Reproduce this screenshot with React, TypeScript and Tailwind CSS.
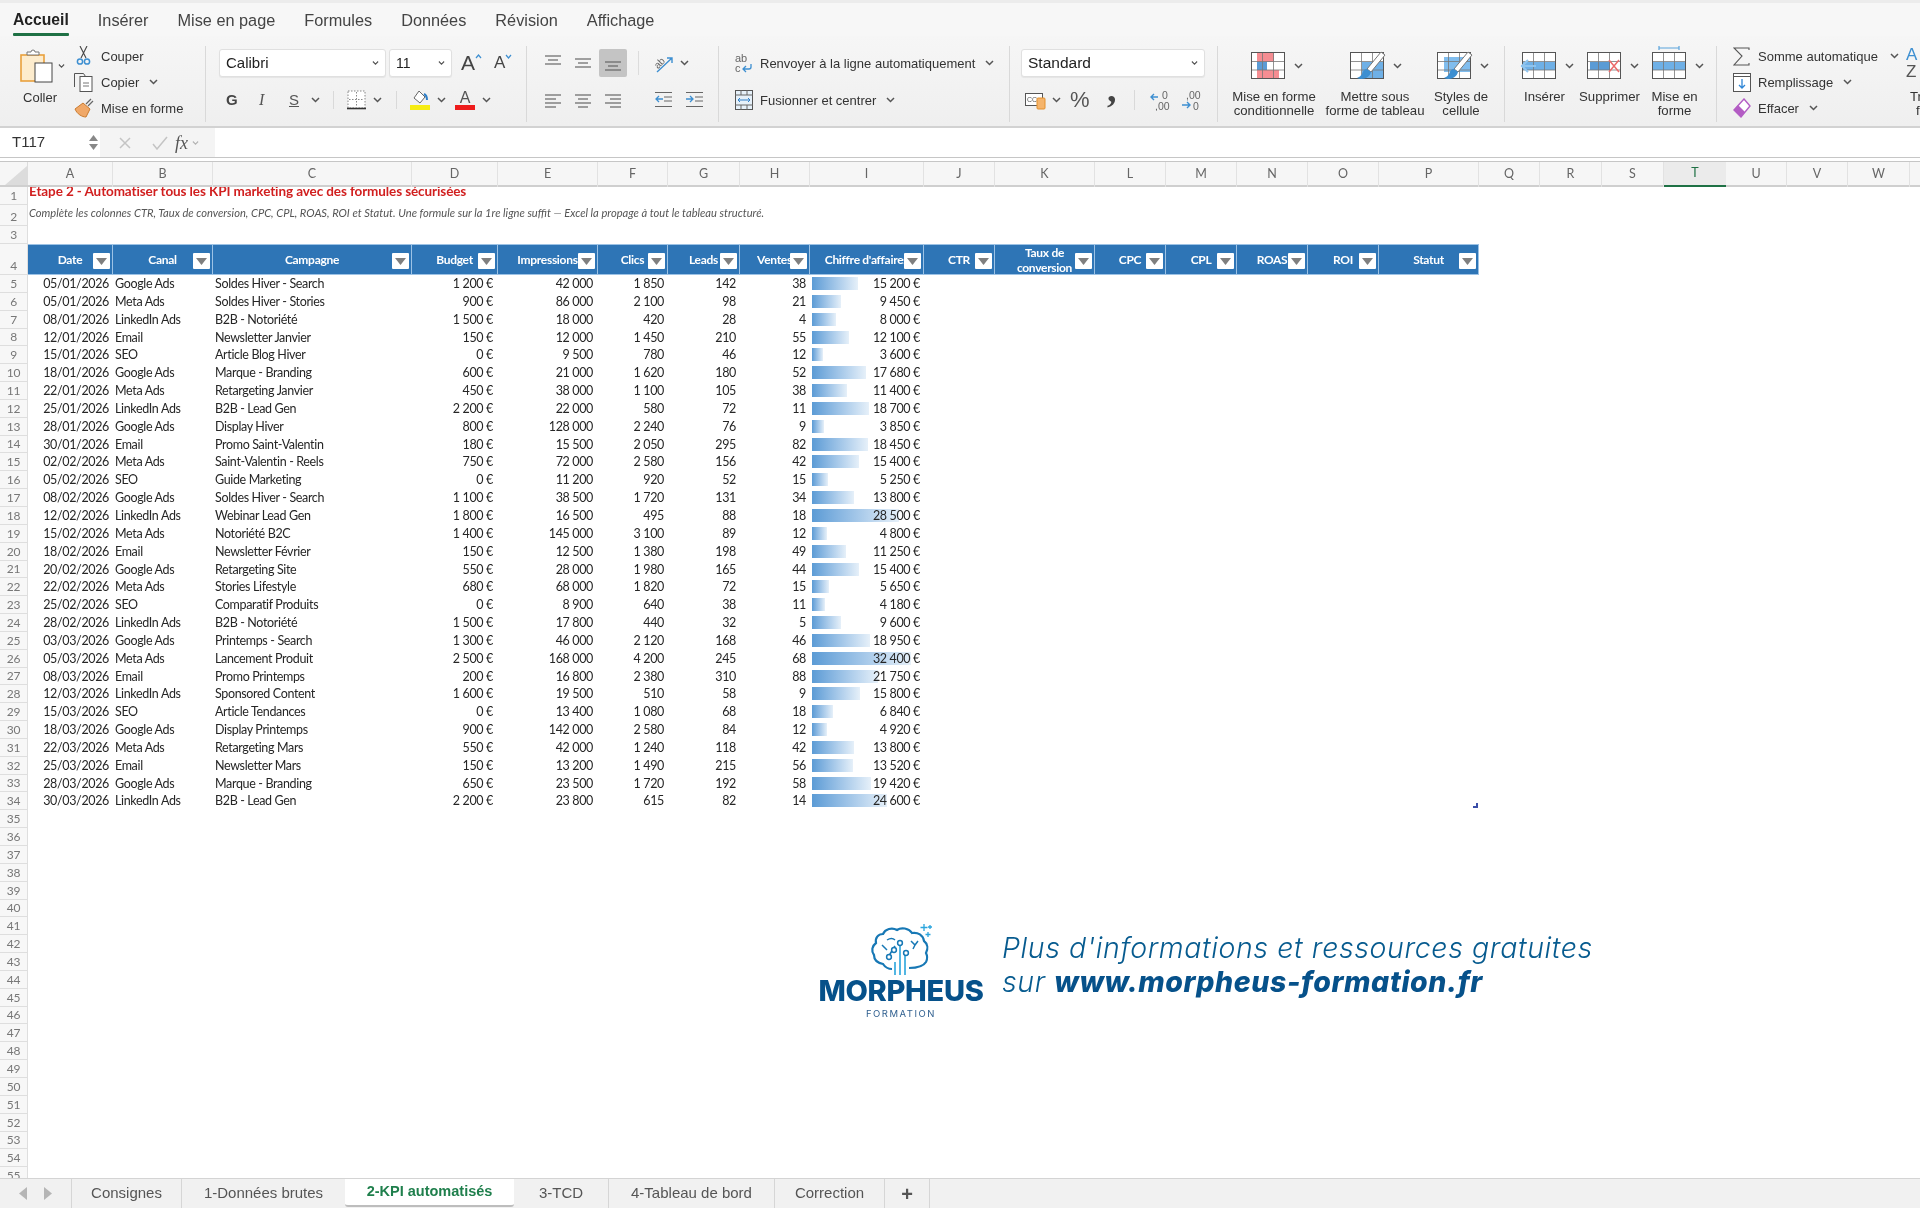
import type { ReactNode } from 'react';

const SHEET_COLS =
    'grid grid-cols-[85px_100px_199px_86px_100px_70px_72px_70px_114px_71px_100px_71px_71px_71px_71px_100px_61px_62px_62px_62px_61px_61px_62px_62px]';

const letters = 'ABCDEFGHIJKLMNOPQRSTUVWX'.split('');

const headers = ['Date', 'Canal', 'Campagne', 'Budget', 'Impressions', 'Clics', 'Leads', 'Ventes', "Chiffre d'affaires", 'CTR', 'Taux de conversion', 'CPC', 'CPL', 'ROAS', 'ROI', 'Statut'];

const rows: [string, string, string, string, string, string, string, string, string, number][] = [
    ['05/01/2026', 'Google Ads', 'Soldes Hiver - Search', '1 200 €', '42 000', '1 850', '142', '38', '15 200 €', 15200],
    ['05/01/2026', 'Meta Ads', 'Soldes Hiver - Stories', '900 €', '86 000', '2 100', '98', '21', '9 450 €', 9450],
    ['08/01/2026', 'LinkedIn Ads', 'B2B - Notoriété', '1 500 €', '18 000', '420', '28', '4', '8 000 €', 8000],
    ['12/01/2026', 'Email', 'Newsletter Janvier', '150 €', '12 000', '1 450', '210', '55', '12 100 €', 12100],
    ['15/01/2026', 'SEO', 'Article Blog Hiver', '0 €', '9 500', '780', '46', '12', '3 600 €', 3600],
    ['18/01/2026', 'Google Ads', 'Marque - Branding', '600 €', '21 000', '1 620', '180', '52', '17 680 €', 17680],
    ['22/01/2026', 'Meta Ads', 'Retargeting Janvier', '450 €', '38 000', '1 100', '105', '38', '11 400 €', 11400],
    ['25/01/2026', 'LinkedIn Ads', 'B2B - Lead Gen', '2 200 €', '22 000', '580', '72', '11', '18 700 €', 18700],
    ['28/01/2026', 'Google Ads', 'Display Hiver', '800 €', '128 000', '2 240', '76', '9', '3 850 €', 3850],
    ['30/01/2026', 'Email', 'Promo Saint-Valentin', '180 €', '15 500', '2 050', '295', '82', '18 450 €', 18450],
    ['02/02/2026', 'Meta Ads', 'Saint-Valentin - Reels', '750 €', '72 000', '2 580', '156', '42', '15 400 €', 15400],
    ['05/02/2026', 'SEO', 'Guide Marketing', '0 €', '11 200', '920', '52', '15', '5 250 €', 5250],
    ['08/02/2026', 'Google Ads', 'Soldes Hiver - Search', '1 100 €', '38 500', '1 720', '131', '34', '13 800 €', 13800],
    ['12/02/2026', 'LinkedIn Ads', 'Webinar Lead Gen', '1 800 €', '16 500', '495', '88', '18', '28 500 €', 28500],
    ['15/02/2026', 'Meta Ads', 'Notoriété B2C', '1 400 €', '145 000', '3 100', '89', '12', '4 800 €', 4800],
    ['18/02/2026', 'Email', 'Newsletter Février', '150 €', '12 500', '1 380', '198', '49', '11 250 €', 11250],
    ['20/02/2026', 'Google Ads', 'Retargeting Site', '550 €', '28 000', '1 980', '165', '44', '15 400 €', 15400],
    ['22/02/2026', 'Meta Ads', 'Stories Lifestyle', '680 €', '68 000', '1 820', '72', '15', '5 650 €', 5650],
    ['25/02/2026', 'SEO', 'Comparatif Produits', '0 €', '8 900', '640', '38', '11', '4 180 €', 4180],
    ['28/02/2026', 'LinkedIn Ads', 'B2B - Notoriété', '1 500 €', '17 800', '440', '32', '5', '9 600 €', 9600],
    ['03/03/2026', 'Google Ads', 'Printemps - Search', '1 300 €', '46 000', '2 120', '168', '46', '18 950 €', 18950],
    ['05/03/2026', 'Meta Ads', 'Lancement Produit', '2 500 €', '168 000', '4 200', '245', '68', '32 400 €', 32400],
    ['08/03/2026', 'Email', 'Promo Printemps', '200 €', '16 800', '2 380', '310', '88', '21 750 €', 21750],
    ['12/03/2026', 'LinkedIn Ads', 'Sponsored Content', '1 600 €', '19 500', '510', '58', '9', '15 800 €', 15800],
    ['15/03/2026', 'SEO', 'Article Tendances', '0 €', '13 400', '1 080', '68', '18', '6 840 €', 6840],
    ['18/03/2026', 'Google Ads', 'Display Printemps', '900 €', '142 000', '2 580', '84', '12', '4 920 €', 4920],
    ['22/03/2026', 'Meta Ads', 'Retargeting Mars', '550 €', '42 000', '1 240', '118', '42', '13 800 €', 13800],
    ['25/03/2026', 'Email', 'Newsletter Mars', '150 €', '13 200', '1 490', '215', '56', '13 520 €', 13520],
    ['28/03/2026', 'Google Ads', 'Marque - Branding', '650 €', '23 500', '1 720', '192', '58', '19 420 €', 19420],
    ['30/03/2026', 'LinkedIn Ads', 'B2B - Lead Gen', '2 200 €', '23 800', '615', '82', '14', '24 600 €', 24600],
];

const emptyRows = Array.from({ length: 21 }, (_, i) => i + 35);

function Chev({ className = '' }: { className?: string }) {
    return (
        <svg width="9" height="6" viewBox="0 0 9 6" className={`shrink-0 ${className}`}>
            <path d="M1 1l3.5 3.5L8 1" fill="none" stroke="#555" strokeWidth="1.5" />
        </svg>
    );
}

// three horizontal strokes, for the alignment buttons
function Lines({ rows: strokes, className = '' }: { rows: [number, number, number][]; className?: string }) {
    return (
        <svg width="18" height="16" viewBox="0 0 18 16" className={`shrink-0 ${className}`}>
            {strokes.map(([x1, x2, y]) => (
                <line key={y} x1={x1} x2={x2} y1={y} y2={y} stroke="#666" strokeWidth="1.2" />
            ))}
        </svg>
    );
}

function CellGrid({ children, over }: { children?: ReactNode; over?: ReactNode }) {
    return (
        <svg width="35" height="27" viewBox="0 0 35 27" className="shrink-0 overflow-visible">
            <rect x="0.5" y="0.5" width="33" height="26" fill="#fff" />
            {children}
            <path d="M11.500 1v25M22.500 1v25M1 9.500h32M1 18h32" stroke="#777" strokeWidth="0.8" />
            <rect x="0.5" y="0.5" width="33" height="26" fill="none" stroke="#555" />
            {over}
        </svg>
    );
}

function BrushOver() {
    return (
        <g>
            <path d="M35 3L21 20l-4-3L31 0z" fill="#fff" stroke="#777" />
            <path d="M17 17c-3 0-4 2-5 5-1 2-3 3-5 4 5 2 12 1 14-6z" fill="#3d8fd1" />
        </g>
    );
}

function Sep() {
    return <div className="w-px h-[76px] bg-[#d9d9d9] shrink-0" />;
}

function SmallLabel({ children, className = '' }: { children: ReactNode; className?: string }) {
    return <span className={`text-[13px] leading-[15px] text-[#333] whitespace-nowrap ${className}`}>{children}</span>;
}

function Select({ label, className, textClass = 'text-[15px]' }: { label: string; className: string; textClass?: string }) {
    return (
        <div className={`h-[28px] bg-white border border-[#e0e0e0] rounded-[3px] shadow-[0_1px_1px_rgba(0,0,0,0.06)] flex items-center justify-between pl-[6px] pr-[5px] ${className}`}>
            <span className={`${textClass} text-[#222]`}>{label}</span>
            <Chev className="scale-75" />
        </div>
    );
}

function LargeAction({ label, icon, width, offset }: { label: ReactNode; icon: ReactNode; width: string; offset?: string }) {
    return (
        <div className={`flex flex-col items-center shrink-0 ${width}`}>
            <div className={`flex items-center h-[27px] mt-[6px] gap-[8px] ${offset ?? ''}`}>
                {icon}
                <Chev />
            </div>
            <div className="mt-[11px] text-center text-[13.2px] leading-[14px] text-[#333] whitespace-nowrap">{label}</div>
        </div>
    );
}

function ClipboardGroup() {
    return (
        <div className="flex w-[205px] shrink-0">
            <div className="w-[73px] pl-[20px] shrink-0">
                <div className="flex items-center gap-[4px] mt-[3px]">
                    <svg width="33" height="34" viewBox="0 0 33 34" className="shrink-0">
                        <rect x="1" y="6" width="23" height="26" fill="#fdeccd" stroke="#e9a13c" strokeWidth="1.6" />
                        <path d="M7 6V3h4a2 2 0 014 0h4v3z" fill="#fff" stroke="#777" />
                        <rect x="15" y="14" width="17" height="19" fill="#fff" stroke="#444" />
                    </svg>
                    <Chev className="scale-75" />
                </div>
                <div className="mt-[7px] w-[40px] text-center text-[13px] leading-[15px] text-[#333]">Coller</div>
            </div>
            <div className="flex flex-col gap-[6px]">
                <div className="h-[20px] flex items-center gap-[7px]">
                    <svg width="21" height="20" viewBox="0 0 21 20" className="shrink-0">
                        <path d="M7 0l6 12M14 0L8 12" stroke="#444" strokeWidth="1.1" fill="none" />
                        <circle cx="7" cy="15.500" r="2.600" fill="none" stroke="#3d8fd1" strokeWidth="1.5" />
                        <circle cx="14" cy="15.500" r="2.600" fill="none" stroke="#3d8fd1" strokeWidth="1.5" />
                    </svg>
                    <SmallLabel>Couper</SmallLabel>
                </div>
                <div className="h-[20px] flex items-center gap-[7px]">
                    <svg width="21" height="20" viewBox="0 0 21 20" className="shrink-0">
                        <path d="M1.500 15V1.500h9l2 3" fill="none" stroke="#555" />
                        <rect x="7" y="4.500" width="12" height="15" fill="#fff" stroke="#555" />
                        <path d="M10 11h6M10 14h6" stroke="#777" />
                    </svg>
                    <SmallLabel>Copier</SmallLabel>
                    <Chev className="ml-[3px]" />
                </div>
                <div className="h-[20px] flex items-center gap-[7px]">
                    <svg width="21" height="20" viewBox="0 0 21 20" className="shrink-0">
                        <path d="M13 6l5-5M15 8l5-5" stroke="#666" strokeWidth="1.2" />
                        <path d="M10 5l7 6-4 8c-4 0-9-3-11-8z" fill="#f0a868" stroke="#c97a2e" />
                    </svg>
                    <SmallLabel>Mise en forme</SmallLabel>
                </div>
            </div>
        </div>
    );
}

function FontGroup() {
    return (
        <div className="w-[320px] shrink-0 pl-[13px] pt-[3px]">
            <div className="flex items-center">
                <Select label="Calibri" className="w-[167px]" />
                <Select label="11" className="w-[63px] ml-[3px]" textClass="text-[14px]" />
                <div className="ml-[9px] flex items-start w-[22px] text-[21px] leading-[24px] text-[#444]">
                    A<svg width="7" height="6" viewBox="0 0 7 6" className="mt-[3px]"><path d="M1 4l2.500-3L6 4" fill="none" stroke="#3d8fd1" strokeWidth="1.2" /></svg>
                </div>
                <div className="ml-[11px] flex items-start w-[22px] text-[17px] leading-[24px] text-[#444]">
                    A<svg width="7" height="6" viewBox="0 0 7 6" className="mt-[3px]"><path d="M1 1l2.500 3L6 1" fill="none" stroke="#3d8fd1" strokeWidth="1.2" /></svg>
                </div>
            </div>
            <div className="flex items-center h-[22px] mt-[12px]">
                <span className="ml-[7px] w-[23px] text-[15px] font-bold text-[#444]">G</span>
                <span className="ml-[10px] w-[22px] text-[16px] italic text-[#555] font-['Liberation_Serif',serif]">I</span>
                <span className="ml-[8px] w-[18px] text-[15px] underline text-[#555]">S</span>
                <Chev className="ml-[4px]" />
                <div className="w-px h-[18px] bg-[#d9d9d9] ml-[13px]" />
                <svg width="19" height="20" viewBox="0 0 19 20" className="ml-[13px] shrink-0">
                    <rect x="1" y="1" width="17" height="17" fill="#fff" stroke="#888" strokeDasharray="1.5 1.5" />
                    <path d="M9.500 2v15M2 9.500h15" stroke="#888" strokeDasharray="1.5 1.5" />
                    <path d="M0 18.500h19" stroke="#333" strokeWidth="1.6" />
                </svg>
                <Chev className="ml-[7px]" />
                <div className="w-px h-[18px] bg-[#d9d9d9] ml-[14px]" />
                <div className="ml-[13px] w-[20px] shrink-0 flex flex-col items-center">
                    <svg width="18" height="15" viewBox="0 0 18 15">
                        <path d="M8 1l6 6-5 6-6-5z" fill="#fff" stroke="#666" />
                        <path d="M13 4c2 1 3 3 3 6" fill="none" stroke="#2f7fc8" strokeWidth="2" />
                    </svg>
                    <div className="w-[20px] h-[5px] bg-[#f6ec12]" />
                </div>
                <Chev className="ml-[7px]" />
                <div className="ml-[9px] w-[20px] shrink-0 flex flex-col items-center">
                    <span className="text-[16px] leading-[15px] text-[#555]">A</span>
                    <div className="w-[20px] h-[5px] bg-[#ee1c1c]" />
                </div>
                <Chev className="ml-[7px]" />
            </div>
        </div>
    );
}

function AlignGroup() {
    return (
        <div className="w-[191px] shrink-0 pl-[17px] pt-[3px]">
            <div className="flex items-center h-[28px]">
                <Lines rows={[[1, 17, 1], [4, 14, 5], [1, 17, 9]]} />
                <Lines rows={[[1, 17, 4], [4, 14, 8], [1, 17, 12]]} className="ml-[12px]" />
                <div className="ml-[7px] w-[28px] h-[28px] bg-[#c4c4c4] rounded-[2px] flex items-center justify-center">
                    <Lines rows={[[1, 17, 7], [4, 14, 11], [1, 17, 15]]} />
                </div>
                <div className="w-px h-[24px] bg-[#dcdcdc] ml-[11px]" />
                <svg width="20" height="21" viewBox="0 0 20 21" className="ml-[15px] shrink-0">
                    <text x="0" y="13" fontSize="10" fill="#666" transform="rotate(-45 6 10)" fontFamily="Liberation Sans">ab</text>
                    <path d="M3 19L18 5M13 5h5v5" fill="none" stroke="#3d8fd1" strokeWidth="1.4" />
                </svg>
                <Chev className="ml-[6px]" />
            </div>
            <div className="flex items-center h-[20px] mt-[13px]">
                <Lines rows={[[1, 17, 3], [1, 12, 7], [1, 17, 11], [1, 12, 15]]} />
                <Lines rows={[[1, 17, 3], [4, 14, 7], [1, 17, 11], [4, 14, 15]]} className="ml-[12px]" />
                <Lines rows={[[1, 17, 3], [6, 17, 7], [1, 17, 11], [6, 17, 15]]} className="ml-[12px]" />
                <svg width="18" height="18" viewBox="0 0 18 18" className="ml-[33px] shrink-0">
                    <path d="M0 1.500h17M9 6h8M9 10h8M0 15.500h17" stroke="#666" />
                    <path d="M8 8H1M4 5L1 8l3 3" fill="none" stroke="#3d8fd1" strokeWidth="1.3" />
                </svg>
                <svg width="18" height="18" viewBox="0 0 18 18" className="ml-[13px] shrink-0">
                    <path d="M0 1.500h17M9 6h8M9 10h8M0 15.500h17" stroke="#666" />
                    <path d="M0 8h7M4 5l3 3-3 3" fill="none" stroke="#3d8fd1" strokeWidth="1.3" />
                </svg>
            </div>
        </div>
    );
}

function WrapGroup() {
    return (
        <div className="w-[290px] shrink-0 pl-[16px] pt-[3px]">
            <div className="flex items-center h-[28px]">
                <svg width="18" height="20" viewBox="0 0 18 20" className="shrink-0">
                    <text x="0" y="9" fontSize="11" fill="#666" fontFamily="Liberation Sans">ab</text>
                    <text x="0" y="19" fontSize="11" fill="#666" fontFamily="Liberation Sans">c</text>
                    <path d="M16 11v3a2 2 0 01-2 2H8M11 13l-3 3 3 3" fill="none" stroke="#3d8fd1" strokeWidth="1.3" />
                </svg>
                <SmallLabel className="ml-[7px] w-[220px]">Renvoyer à la ligne automatiquement</SmallLabel>
                <Chev className="ml-[5px]" />
            </div>
            <div className="flex items-center h-[20px] mt-[13px]">
                <svg width="18" height="20" viewBox="0 0 18 20" className="shrink-0">
                    <rect x="0.5" y="0.5" width="17" height="19" fill="#e6f1fa" stroke="#555" />
                    <path d="M0 5h18M0 15h18M6 0v5M12 0v5M6 15v5M12 15v5" stroke="#666" />
                    <path d="M3 10h12M5 8l-2 2 2 2M13 8l2 2-2 2" fill="none" stroke="#2f7fc8" />
                </svg>
                <SmallLabel className="ml-[7px] w-[121px]">Fusionner et centrer</SmallLabel>
                <Chev className="ml-[5px]" />
            </div>
        </div>
    );
}

function NumberGroup() {
    return (
        <div className="w-[207px] shrink-0 pl-[11px] pt-[3px]">
            <Select label="Standard" className="w-[184px]" textClass="text-[15.500px]" />
            <div className="flex items-center h-[22px] mt-[12px]">
                <svg width="21" height="20" viewBox="0 0 21 20" className="ml-[4px] shrink-0">
                    <rect x="0.5" y="3.500" width="17" height="12" fill="#fff" stroke="#555" />
                    <text x="2" y="12" fontSize="7" fill="#555" fontFamily="Liberation Sans">CC</text>
                    <rect x="12" y="8" width="8" height="11" rx="1" fill="#f5b46b" stroke="#e2902f" />
                </svg>
                <Chev className="ml-[6px]" />
                <span className="ml-[9px] w-[22px] text-[22px] leading-[22px] font-light text-[#555]">%</span>
                <span className="ml-[15px] w-[12px] h-[22px] text-[38px] leading-[0px] font-bold text-[#444] font-['Liberation_Serif',serif]">,</span>
                <div className="w-px h-[20px] bg-[#d9d9d9] ml-[15px]" />
                <svg width="20" height="21" viewBox="0 0 20 21" className="ml-[15px] shrink-0">
                    <path d="M8 7H1M4 4L1 7l3 3" fill="none" stroke="#3d8fd1" strokeWidth="1.4" />
                    <text x="12" y="9" fontSize="10.500" fill="#666" fontFamily="Liberation Sans">0</text>
                    <text x="5" y="20" fontSize="10.500" fill="#666" fontFamily="Liberation Sans">,00</text>
                </svg>
                <svg width="20" height="21" viewBox="0 0 20 21" className="ml-[11px] shrink-0">
                    <text x="5" y="9" fontSize="10.500" fill="#666" fontFamily="Liberation Sans">,00</text>
                    <path d="M1 15h8M6 12l3 3-3 3" fill="none" stroke="#3d8fd1" strokeWidth="1.4" />
                    <text x="12" y="20" fontSize="10.500" fill="#666" fontFamily="Liberation Sans">0</text>
                </svg>
            </div>
        </div>
    );
}

function StylesGroup() {
    return (
        <div className="flex w-[286px] shrink-0">
            <LargeAction
                width="w-[112px]"
                label={<>Mise en forme<br />conditionnelle</>}
                offset="ml-[6px]"
                icon={
                    <CellGrid>
                        <rect x="6" y="1" width="17" height="9" fill="#f58d92" />
                        <rect x="6" y="10" width="10" height="8" fill="#5b9bd5" />
                        <rect x="6" y="18" width="22" height="8" fill="#f58d92" />
                    </CellGrid>
                }
            />
            <LargeAction
                width="w-[90px]"
                label={<>Mettre sous<br />forme de tableau</>}
                offset="ml-[2px]"
                icon={
                    <CellGrid over={<BrushOver />}>
                        <rect x="12" y="10" width="21" height="16" fill="#6fb0e6" />
                    </CellGrid>
                }
            />
            <LargeAction
                width="w-[82px]"
                label={<>Styles de<br />cellule</>}
                offset="ml-[4px]"
                icon={
                    <CellGrid over={<BrushOver />}>
                        <rect x="7" y="5" width="26" height="15" fill="#80bdee" />
                    </CellGrid>
                }
            />
        </div>
    );
}

function CellsGroup() {
    return (
        <div className="flex w-[211px] shrink-0 pl-[7px]">
            <LargeAction
                width="w-[65px]"
                label="Insérer"
                offset="ml-[6px]"
                icon={
                    <CellGrid
                        over={<path d="M14 14H-1M6 8l-6 6 6 6" fill="none" stroke="#8fc4ee" strokeWidth="2" />}
                    >
                        <rect x="1" y="10" width="33" height="8" fill="#6fb0e6" />
                    </CellGrid>
                }
            />
            <LargeAction
                width="w-[65px]"
                label="Supprimer"
                offset="ml-[6px]"
                icon={
                    <CellGrid over={<path d="M22 8l10 12M32 8L22 20" stroke="#ec6a6a" strokeWidth="1.5" />}>
                        <rect x="3" y="10" width="20" height="8" fill="#5b9bd5" />
                    </CellGrid>
                }
            />
            <LargeAction
                width="w-[65px]"
                label={<>Mise en<br />forme</>}
                offset="ml-[6px]"
                icon={
                    <CellGrid
                        over={<path d="M7 -6v4M27 -6v4M7 -4h20" stroke="#5ba4dc" strokeWidth="1.2" fill="none" />}
                    >
                        <rect x="12" y="10" width="21" height="8" fill="#6fb0e6" />
                        <rect x="1" y="10" width="11" height="8" fill="#6fb0e6" />
                    </CellGrid>
                }
            />
        </div>
    );
}

function EditingGroup() {
    return (
        <div className="flex shrink-0 pl-[16px]">
            <div className="flex flex-col gap-[6px] w-[173px] shrink-0">
                <div className="h-[20px] flex items-center gap-[8px]">
                    <svg width="17" height="19" viewBox="0 0 17 19" className="shrink-0">
                        <path d="M16 3V1H1l8 8-8 9h15v-2" fill="none" stroke="#555" strokeWidth="1.1" />
                    </svg>
                    <SmallLabel>Somme automatique</SmallLabel>
                    <Chev className="ml-[4px]" />
                </div>
                <div className="h-[20px] flex items-center gap-[7px]">
                    <svg width="18" height="19" viewBox="0 0 18 19" className="shrink-0">
                        <rect x="0.5" y="0.5" width="17" height="18" fill="#fff" stroke="#555" />
                        <path d="M0 3.500h18" stroke="#555" />
                        <path d="M9 6v9M6 12l3 3 3-3" fill="none" stroke="#2f86d6" strokeWidth="1.3" />
                    </svg>
                    <SmallLabel>Remplissage</SmallLabel>
                    <Chev className="ml-[3px]" />
                </div>
                <div className="h-[20px] flex items-center gap-[7px]">
                    <svg width="18" height="20" viewBox="0 0 18 20" className="shrink-0">
                        <path d="M11 1l6 7-9 11-7-7z" fill="#fff" stroke="#b35cc4" strokeWidth="1.4" />
                        <path d="M5 7l7 7-4 5-7-7z" fill="#b35cc4" />
                    </svg>
                    <SmallLabel>Effacer</SmallLabel>
                    <Chev className="ml-[3px]" />
                </div>
            </div>
            <div className="flex flex-col items-start shrink-0">
                <div className="text-[17px] leading-[17px] text-[#3d8fd1]">A</div>
                <div className="text-[17px] leading-[17px] text-[#555]">Z</div>
                <div className="mt-[10px] ml-[4px] text-center text-[13.2px] leading-[14px] text-[#333] whitespace-nowrap">Trier et<br />filtrer</div>
            </div>
        </div>
    );
}

function FormulaBar() {
    return (
        <div className="h-[29px] flex bg-[#f4f4f4] shrink-0">
            <div className="w-[100px] bg-white flex items-center justify-between pl-[12px] pr-[2px] shrink-0">
                <span className="text-[15px] text-[#333]">T117</span>
                <div className="flex flex-col gap-[3px]">
                    <svg width="9" height="6" viewBox="0 0 9 6"><path d="M4.500 0L9 6H0z" fill="#888" /></svg>
                    <svg width="9" height="6" viewBox="0 0 9 6"><path d="M4.500 6L9 0H0z" fill="#888" /></svg>
                </div>
            </div>
            <div className="w-[115px] flex items-center pl-[18px] shrink-0">
                <svg width="14" height="14" viewBox="0 0 14 14" className="shrink-0"><path d="M2 2l10 10M12 2L2 12" stroke="#c4c4c4" strokeWidth="1.5" /></svg>
                <svg width="16" height="14" viewBox="0 0 16 14" className="ml-[20px] shrink-0"><path d="M1 8l4 5L15 1" fill="none" stroke="#c4c4c4" strokeWidth="1.5" /></svg>
                <span className="ml-[7px] text-[18px] leading-[18px] italic text-[#555] font-['Liberation_Serif',serif]">fx</span>
                <Chev className="ml-[3px] scale-75 opacity-40" />
            </div>
            <div className="flex-1 bg-white" />
        </div>
    );
}

function RowNumber({ n }: { n: number }) {
    return (
        <div className="w-[28px] shrink-0 bg-[#f7f7f7] border-r border-b border-[#dedede] flex items-end justify-center text-[12px] leading-[16px] text-[#777] font-['Lato',sans-serif] tracking-[-0.3px]">
            {n}
        </div>
    );
}

function FilterButton() {
    return (
        <div className="absolute right-[2px] bottom-[5px] w-[17px] h-[16px] bg-white rounded-[1px] flex items-center justify-center">
            <svg width="11" height="7" viewBox="0 0 11 7"><path d="M0 0h11L5.500 7z" fill="#7f7f7f" /></svg>
        </div>
    );
}

function SheetTabs() {
    const tab = 'h-full shrink-0 flex items-center justify-center border-r border-[#d6d6d6] text-[15px] text-[#555]';
    return (
        <div className="h-[30px] shrink-0 flex bg-[#f1f1f1] border-t border-[#d4d4d4]">
            <div className={`${tab} w-[72px] gap-[17px]`}>
                <svg width="8" height="13" viewBox="0 0 8 13"><path d="M8 0v13L0 6.500z" fill="#b5b5b5" /></svg>
                <svg width="8" height="13" viewBox="0 0 8 13"><path d="M0 0v13l8-6.500z" fill="#b5b5b5" /></svg>
            </div>
            <div className={`${tab} w-[110px]`}>Consignes</div>
            <div className={`${tab} w-[163px] border-r-0`}>1-Données brutes</div>
            <div className="w-[169px] h-[28px] shrink-0 bg-white border-b-2 border-[#bdbdbd] rounded-b-[3px] flex items-center justify-center text-[14.500px] font-semibold text-[#1f7f4c]">2-KPI automatisés</div>
            <div className={`${tab} w-[95px]`}>3-TCD</div>
            <div className={`${tab} w-[166px]`}>4-Tableau de bord</div>
            <div className={`${tab} w-[110px]`}>Correction</div>
            <div className={`${tab} w-[45px] text-[20px] font-semibold text-[#444]`}>+</div>
        </div>
    );
}

function Promo() {
    return (
        <div className="absolute left-[818px] top-[737px] flex">
            <div className="w-[184px] shrink-0 flex flex-col">
                <svg width="66" height="52" viewBox="0 0 66 52" className="ml-[50px]">
                    <path d="M41 44c7 0 14-1 17-6 2-4 1-7 0-9 2-4 2-9-2-12-1-6-6-9-12-8-3-5-11-6-15-3-5-3-12-1-14 4-5 0-8 4-7 9-4 3-5 8-2 12 0 5 4 8 9 9 2 3 5 5 9 5" fill="none" stroke="#1778b5" strokeWidth="2.2" />
                    <path d="M27 38v13M32 22v29M37 30v21" stroke="#2aa5dd" strokeWidth="1.6" fill="none" />
                    <path d="M27 22l-5 8v5" stroke="#1778b5" strokeWidth="1.6" fill="none" />
                    <circle cx="32" cy="19" r="2.400" fill="#fff" stroke="#1778b5" strokeWidth="1.5" />
                    <circle cx="26" cy="26" r="2.400" fill="#fff" stroke="#1778b5" strokeWidth="1.5" />
                    <circle cx="21" cy="33" r="2.400" fill="#fff" stroke="#1778b5" strokeWidth="1.5" />
                    <circle cx="38" cy="29" r="2.400" fill="#fff" stroke="#1778b5" strokeWidth="1.5" />
                    <path d="M14 21l5 5M19 16c3-2 6-2 8 0M43 17l4 4 3-4M47 21l-2 4" stroke="#1778b5" strokeWidth="1.500" fill="none" />
                    <path d="M56 0v7M52.500 3.500h7M62 1v4M60 3h4M60 8v5M57.500 10.500h5" stroke="#2aa5dd" strokeWidth="1.300" />
                </svg>
                <div className="w-[166px] text-center text-[29px] leading-[26px] mt-[2px] font-extrabold tracking-[-0.3px] text-[#06518a] font-['Inter',sans-serif]">MORPHEUS</div>
                <div className="w-[166px] text-center text-[9.500px] leading-[10px] mt-[5px] tracking-[0.16em] text-[#2f5f8f] font-['Inter',sans-serif]">FORMATION</div>
            </div>
            <div className="mt-[7px] text-[28.500px] leading-[34px] tracking-[0.6px] italic font-light text-[#075b8f] font-['Inter',sans-serif] whitespace-nowrap">
                <div>Plus d'informations et ressources gratuites</div>
                <div>sur <span className="font-extrabold text-[#06518a]">www.morpheus-formation.fr</span></div>
            </div>
        </div>
    );
}

export default function App() {
    const tabs = ['Insérer', 'Mise en page', 'Formules', 'Données', 'Révision', 'Affichage'];
    const cell = 'text-[12.5px] leading-[17px] text-[#262626] tracking-[-0.35px] whitespace-nowrap';

    return (
        <div className="w-[1920px] h-[1208px] overflow-hidden flex flex-col bg-white font-['Liberation_Sans',sans-serif] blur-[0.5px]">
            {/* Tabs */}
            <div className="h-[36px] shrink-0 bg-[#f7f7f7] border-t-[3px] border-[#ececec] flex gap-[29px] pl-[13px] text-[16.300px] text-[#444]">
                <div className="h-full flex flex-col">
                    <span className="flex-1 flex items-center pt-[3px] text-[15.700px] font-bold text-[#222]">Accueil</span>
                    <div className="h-[3px] bg-[#1f7145] rounded-[1px]" />
                </div>
                {tabs.map(t => (
                    <span key={t} className="flex items-center pt-[1px]">{t}</span>
                ))}
            </div>

            {/* Ribbon */}
            <div className="h-[90px] shrink-0 bg-linear-to-b from-[#f6f6f6] to-[#efefef] flex items-start pt-[10px] overflow-hidden">
                <ClipboardGroup />
                <Sep />
                <FontGroup />
                <Sep />
                <AlignGroup />
                <Sep />
                <WrapGroup />
                <Sep />
                <NumberGroup />
                <Sep />
                <StylesGroup />
                <Sep />
                <CellsGroup />
                <Sep />
                <EditingGroup />
            </div>
            <div className="h-[2px] shrink-0 bg-[#d2d2d2]" />

            <FormulaBar />
            <div className="h-[5px] shrink-0 bg-white border-y border-[#c6c6c6]" />

            {/* Column letters */}
            <div className="h-[25px] shrink-0 flex bg-[#f6f6f6] border-b-2 border-[#cfcfcf] font-['Lato',sans-serif] text-[12.5px] text-[#666]">
                <div className="w-[28px] shrink-0 border-r border-[#dcdcdc] bg-[#f6f6f6] flex items-end justify-end">
                    <svg width="22" height="19" viewBox="0 0 22 19"><path d="M22 0v19H0z" fill="#dcdcdc" /></svg>
                </div>
                <div className={SHEET_COLS}>
                    {letters.map(l => (
                        <div key={l} className={l === 'T' ? 'h-[25px] flex items-center justify-center bg-[#ebebeb] text-[#1f7145] border-b-2 border-[#1f7145]' : 'flex items-center justify-center border-r border-[#e2e2e2]'}>
                            {l}
                        </div>
                    ))}
                </div>
            </div>

            {/* Sheet */}
            <div className="flex-1 overflow-hidden relative font-['Lato',sans-serif]">
                <div className="flex h-[18px]">
                    <RowNumber n={1} />
                    <div className="overflow-hidden flex-1 pl-[1px]">
                        <div className="-mt-[2px] text-[13.500px] leading-[12px] font-bold text-[#d11f1f] tracking-[-0.1px] whitespace-nowrap">Etape 2 - Automatiser tous les KPI marketing avec des formules sécurisées</div>
                    </div>
                </div>
                <div className="flex h-[21px]">
                    <RowNumber n={2} />
                    <div className="flex-1 pl-[1px] pt-[1px] text-[11.150px] leading-[14px] italic text-[#555] whitespace-nowrap">
                        Complète les colonnes CTR, Taux de conversion, CPC, CPL, ROAS, ROI et Statut. Une formule sur la 1re ligne suffit — Excel la propage à tout le tableau structuré.
                    </div>
                </div>
                <div className="flex h-[18px]">
                    <RowNumber n={3} />
                </div>
                <div className="flex h-[31px]">
                    <RowNumber n={4} />
                    <div className={SHEET_COLS}>
                        {headers.map(h => (
                            <div key={h} className="relative h-[31px] bg-[#2e75b6] border-y border-r border-[#9cc2e5] flex items-center justify-center text-center overflow-hidden text-[12px] leading-[15px] font-bold text-white tracking-[-0.3px]">
                                <span className={h === 'Taux de conversion' ? 'w-[90px]' : 'whitespace-nowrap'}>{h}</span>
                                <FilterButton />
                            </div>
                        ))}
                    </div>
                </div>

                {rows.map((r, i) => (
                    <div key={i} className="flex h-[17.85px]">
                        <RowNumber n={i + 5} />
                        <div className={SHEET_COLS}>
                            <div className={`${cell} text-right pr-[4px]`}>{r[0]}</div>
                            <div className={`${cell} pl-[2px]`}>{r[1]}</div>
                            <div className={`${cell} pl-[2px]`}>{r[2]}</div>
                            <div className={`${cell} text-right pr-[5px]`}>{r[3]}</div>
                            <div className={`${cell} text-right pr-[5px]`}>{r[4]}</div>
                            <div className={`${cell} text-right pr-[4px]`}>{r[5]}</div>
                            <div className={`${cell} text-right pr-[4px]`}>{r[6]}</div>
                            <div className={`${cell} text-right pr-[4px]`}>{r[7]}</div>
                            <div className={`${cell} relative text-right pr-[4px]`}>
                                <div
                                    className="absolute left-[2px] top-[2px] h-[13px] bg-linear-to-r from-[#5b9bd5] to-[#e6f0f9]"
                                    style={{ width: `${(r[9] / 32400) * 99}px` }}
                                />
                                <span className="relative">{r[8]}</span>
                            </div>
                        </div>
                    </div>
                ))}

                {emptyRows.map(n => (
                    <div key={n} className="flex h-[17.85px]">
                        <RowNumber n={n} />
                    </div>
                ))}

                <svg width="5" height="5" viewBox="0 0 5 5" className="absolute left-[1473px] top-[616px]">
                    <path d="M5 0v5H0V3h3V0z" fill="#3b4ea8" />
                </svg>
                <Promo />
            </div>

            <SheetTabs />
        </div>
    );
}
